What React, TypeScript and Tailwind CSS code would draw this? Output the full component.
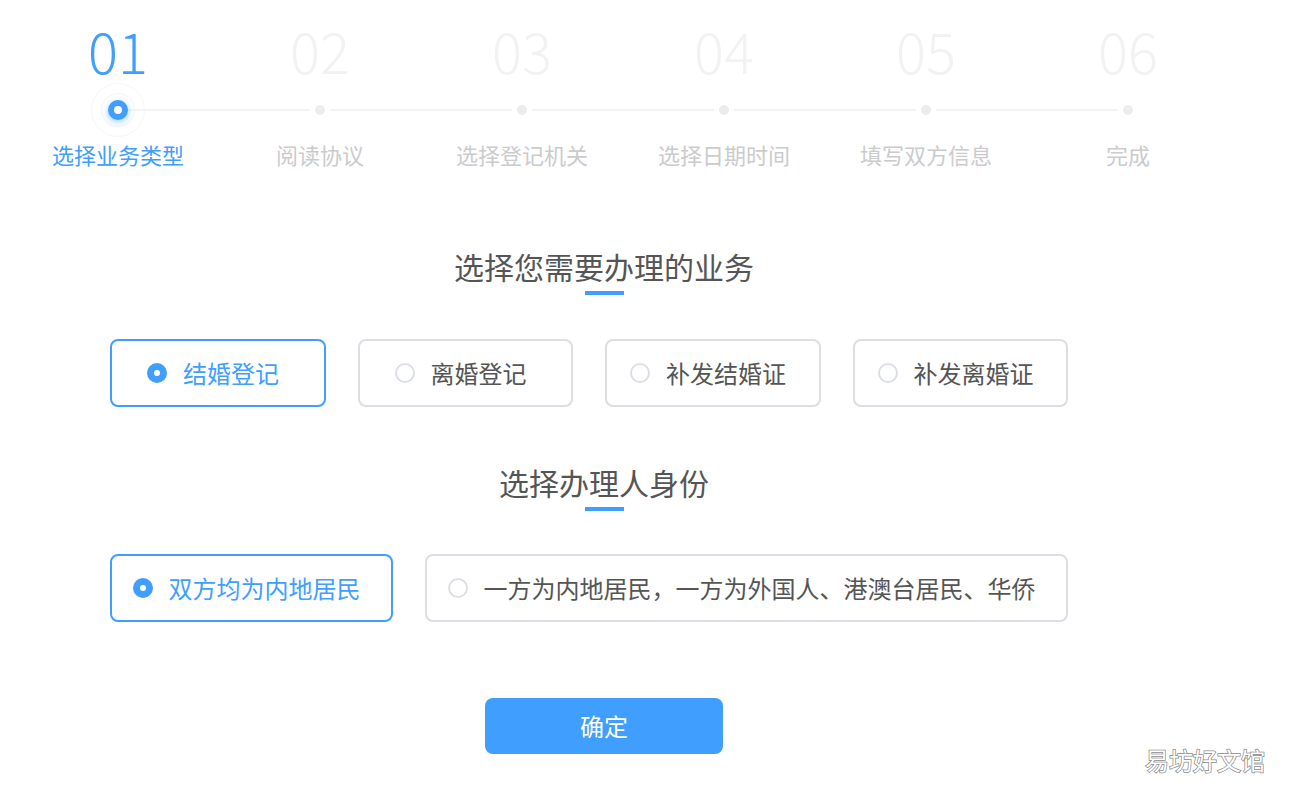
import React, { useState } from 'react'

const steps = ['选择业务类型', '阅读协议', '选择登记机关', '选择日期时间', '填写双方信息', '完成']

const businessOptions = [
  { label: '结婚登记', width: 'w-[216px]' },
  { label: '离婚登记', width: 'w-[215px]' },
  { label: '补发结婚证', width: 'w-[216px]' },
  { label: '补发离婚证', width: 'w-[215px]' },
]

const identityOptions = [
  { label: '双方均为内地居民', width: 'w-[283px]' },
  { label: '一方为内地居民，一方为外国人、港澳台居民、华侨', width: 'w-[643px]' },
]

const font = "font-['Noto_Sans_CJK_SC','Noto_Sans',sans-serif]"

function Steps({ current }: { current: number }) {
  return (
    <div className="ml-[17px] flex pt-[22px]">
      {steps.map((label, i) => {
        const active = i === current
        return (
          <div key={label} className="flex w-[202px] flex-col items-center">
            <span
              className={`text-[56px] font-light leading-none ${active ? 'text-[#409eff]' : 'text-[#f2f2f2]'}`}
            >
              {String(i + 1).padStart(2, '0')}
            </span>
            <div className="mt-1 flex h-14 w-full items-center">
              <div className={`h-[2px] flex-1 ${i === 0 ? '' : 'bg-[#f3f3f3]'}`} />
              <div className="relative flex w-5 items-center justify-center">
                {active ? (
                  <>
                    <span className="absolute -left-[17px] -top-[17px] h-[54px] w-[54px] rounded-full border border-[#f6f6f6]" />
                    <span className="absolute -left-[7px] -top-[7px] h-[34px] w-[34px] rounded-full border border-[#f4f4f4]" />
                    <span className="relative h-5 w-5 rounded-full border-[6px] border-[#409eff] bg-white shadow-[0_2px_6px_rgba(64,158,255,0.55)]" />
                  </>
                ) : (
                  <span className="h-[10px] w-[10px] rounded-full bg-[#ececec]" />
                )}
              </div>
              <div className={`h-[2px] flex-1 ${i === steps.length - 1 ? '' : 'bg-[#f3f3f3]'}`} />
            </div>
            <span className={`mt-[5px] text-[22px] leading-[22px] ${active ? 'text-[#409eff]' : 'text-[#cbcbcd]'}`}>
              {label}
            </span>
          </div>
        )
      })}
    </div>
  )
}

function SectionTitle({ children, className }: { children: React.ReactNode; className?: string }) {
  return (
    <div className={`flex flex-col items-center ${className ?? ''}`}>
      <h2 className="text-[30px] leading-[30px] text-[#555555]">{children}</h2>
      <span className="mt-[10px] h-1 w-[39px] bg-[#409eff]" />
    </div>
  )
}

function Radio({ checked }: { checked: boolean }) {
  return checked ? (
    <span className="h-5 w-5 shrink-0 rounded-full border-[7px] border-[#409eff] bg-white" />
  ) : (
    <span className="h-5 w-5 shrink-0 rounded-full border-2 border-[#dcdfe6] bg-white" />
  )
}

type OptionProps = {
  label: string
  width: string
  checked: boolean
  onSelect: () => void
}

function OptionCard({ label, width, checked, onSelect }: OptionProps) {
  return (
    <button
      type="button"
      onClick={onSelect}
      className={`flex h-[68px] ${width} items-center justify-center gap-[16px] rounded-lg border-2 bg-white pr-[10px] ${
        checked ? 'border-[#409eff] text-[#409eff]' : 'border-[#dcdee3] text-[#555555]'
      }`}
    >
      <Radio checked={checked} />
      <span className="text-[24px] leading-none">{label}</span>
    </button>
  )
}

export default function App() {
  const [business, setBusiness] = useState(0)
  const [identity, setIdentity] = useState(0)

  return (
    <div className={`relative min-h-[793px] w-full overflow-hidden bg-white ${font}`}>
      <Steps current={0} />

      <div className="ml-[110px] w-[988px]">
        <SectionTitle className="mt-[86px]">选择您需要办理的业务</SectionTitle>
        <div className="mt-[44px] flex gap-8">
          {businessOptions.map((opt, i) => (
            <OptionCard
              key={opt.label}
              label={opt.label}
              width={opt.width}
              checked={business === i}
              onSelect={() => setBusiness(i)}
            />
          ))}
        </div>

        <SectionTitle className="mt-[60px]">选择办理人身份</SectionTitle>
        <div className="mt-[43px] flex gap-8">
          {identityOptions.map((opt, i) => (
            <OptionCard
              key={opt.label}
              label={opt.label}
              width={opt.width}
              checked={identity === i}
              onSelect={() => setIdentity(i)}
            />
          ))}
        </div>

        <div className="mt-[76px] flex justify-center">
          <button
            type="button"
            className="h-14 w-[238px] rounded-lg bg-[#409eff] text-[24px] leading-none text-white"
          >
            确定
          </button>
        </div>
      </div>

      <span className="absolute bottom-[21px] right-[27px] text-[24px] leading-none text-white [-webkit-text-stroke:1.5px_#8a8a8a] [paint-order:stroke_fill]">
        易坊好文馆
      </span>
    </div>
  )
}
